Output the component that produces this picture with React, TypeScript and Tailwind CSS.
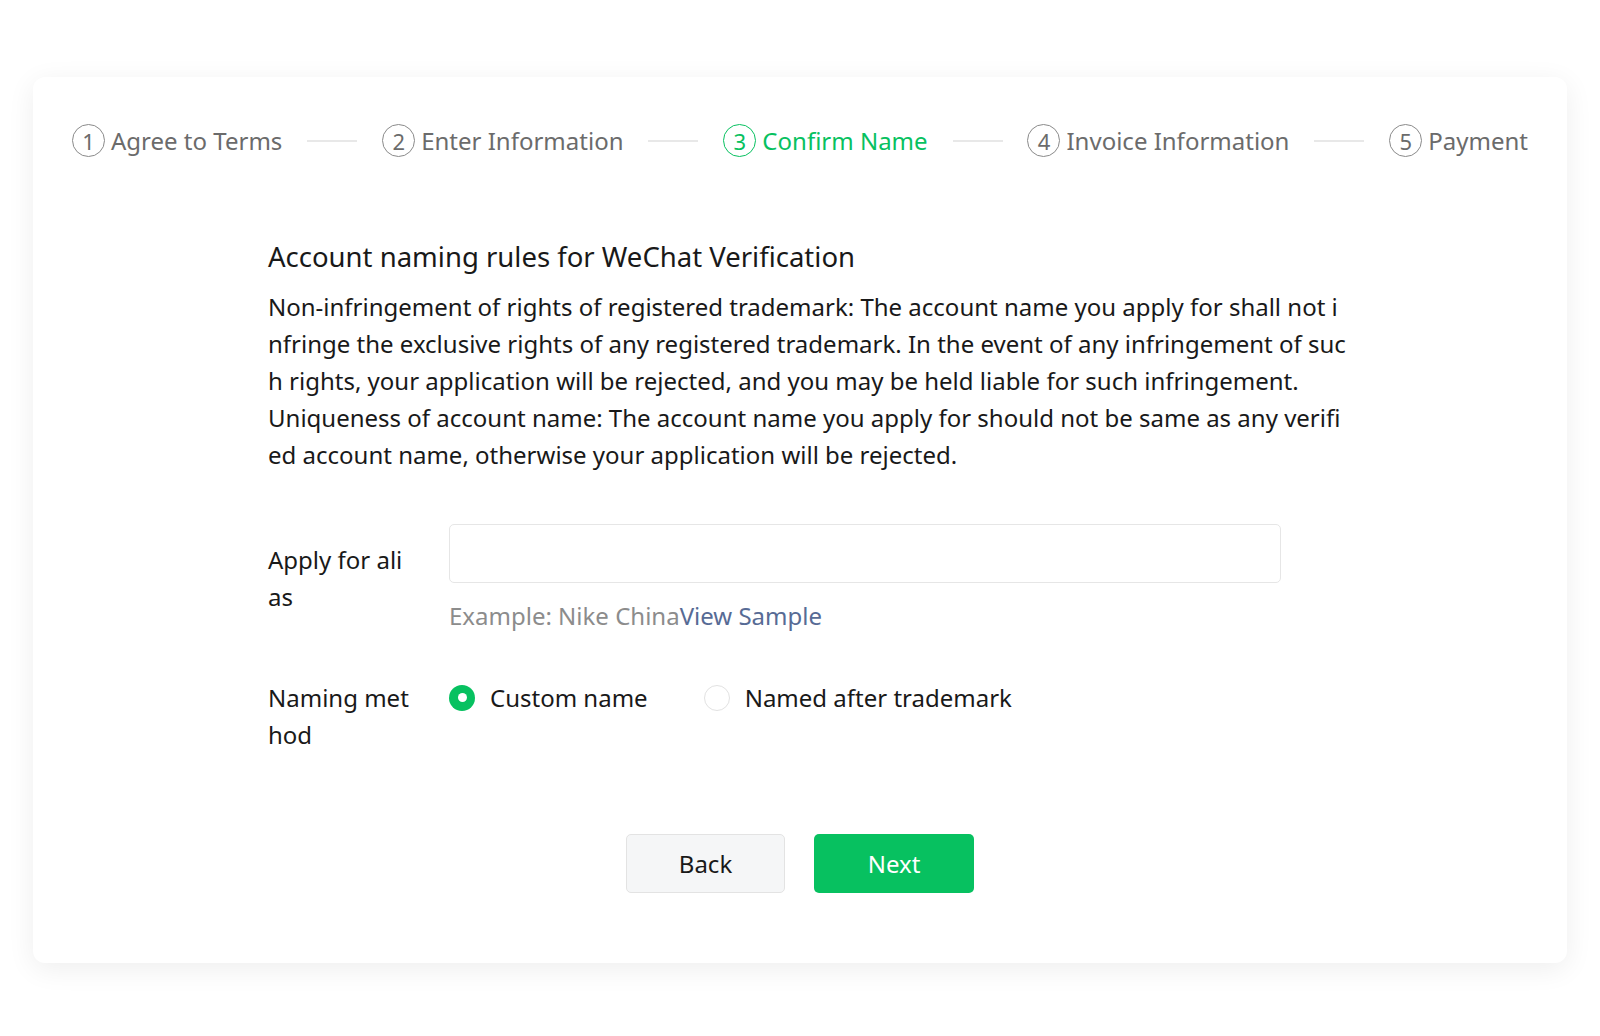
import React from 'react';

const steps = [
  { n: '1', label: 'Agree to Terms' },
  { n: '2', label: 'Enter Information' },
  { n: '3', label: 'Confirm Name', active: true },
  { n: '4', label: 'Invoice Information' },
  { n: '5', label: 'Payment' },
];

const rules = [
  'Non-infringement of rights of registered trademark: The account name you apply for shall not i',
  'nfringe the exclusive rights of any registered trademark. In the event of any infringement of suc',
  'h rights, your application will be rejected, and you may be held liable for such infringement.',
  'Uniqueness of account name: The account name you apply for should not be same as any verifi',
  'ed account name, otherwise your application will be rejected.',
];

const Step = ({ n, label, active }: { n: string; label: string; active?: boolean }) => (
  <div className={`flex items-center gap-[6px] ${active ? 'text-[#07c160]' : 'text-[#6b6b6b]'}`}>
    <span
      className={`flex h-[33px] w-[33px] items-center justify-center rounded-full border-[1.5px] text-[22px] leading-none ${
        active ? 'border-[#07c160]' : 'border-[#8a8a8a]'
      }`}
    >
      {n}
    </span>
    <span className="text-[24px] leading-none whitespace-nowrap">{label}</span>
  </div>
);

const Radio = ({ checked, label }: { checked?: boolean; label: string }) => (
  <label className="flex items-center gap-[15px] cursor-pointer">
    {checked ? (
      <span className="flex h-[26px] w-[26px] items-center justify-center rounded-full bg-[#07c160]">
        <span className="h-[9px] w-[9px] rounded-full bg-white" />
      </span>
    ) : (
      <span className="h-[26px] w-[26px] rounded-full border-[1.5px] border-[#e2e2e2] bg-white" />
    )}
    <span>{label}</span>
  </label>
);

export default function App() {
  return (
    <div
      className="min-h-screen bg-white px-[33px] pt-[77px] text-[#191919]"
      style={{ fontFamily: '"Noto Sans", "Open Sans", sans-serif' }}
    >
      <div className="rounded-[12px] bg-white pb-[70px] shadow-[0_6px_28px_rgba(0,0,0,0.07)]">
        {/* steps */}
        <div className="flex items-center justify-between px-[39px] pt-[47px]">
          {steps.map((s, i) => (
            <React.Fragment key={s.n}>
              {i > 0 && <div className="h-[2px] w-[50px] bg-[#e8e8e8]" />}
              <Step {...s} />
            </React.Fragment>
          ))}
        </div>

        <div className="mx-auto mt-[81px] w-[1064px] text-[24px] leading-[37px]">
          <h2 className="text-[27.5px] leading-[37px]">Account naming rules for WeChat Verification</h2>
          <div className="mt-[13px]">
            {rules.map((line) => (
              <p key={line} className="whitespace-nowrap">
                {line}
              </p>
            ))}
          </div>

          <div className="mt-[51px] flex">
            <div className="w-[181px] shrink-0 pt-[17px]">
              <div>Apply for ali</div>
              <div>as</div>
            </div>
            <div>
              <input
                className="block h-[59px] w-[832px] rounded-[5px] border-[1.5px] border-[#e6e6e6] px-4 outline-none"
                type="text"
              />
              <div className="mt-[14px] text-[#8c8c8c]">
                Example: Nike China<span className="text-[#576b95]">View Sample</span>
              </div>
            </div>
          </div>

          <div className="mt-[45px] flex">
            <div className="w-[181px] shrink-0">
              <div>Naming met</div>
              <div>hod</div>
            </div>
            <div className="flex h-[37px] items-center gap-[56px]">
              <Radio checked label="Custom name" />
              <Radio label="Named after trademark" />
            </div>
          </div>
        </div>

        <div className="mt-[81px] flex justify-center gap-[29px] text-[24px]">
          <button className="h-[59px] w-[159px] rounded-[5px] border-[1.5px] border-[#e3e3e3] bg-[#f5f6f7] text-[#191919]">
            Back
          </button>
          <button className="h-[59px] w-[160px] rounded-[5px] bg-[#07c160] text-white">Next</button>
        </div>
      </div>
    </div>
  );
}
